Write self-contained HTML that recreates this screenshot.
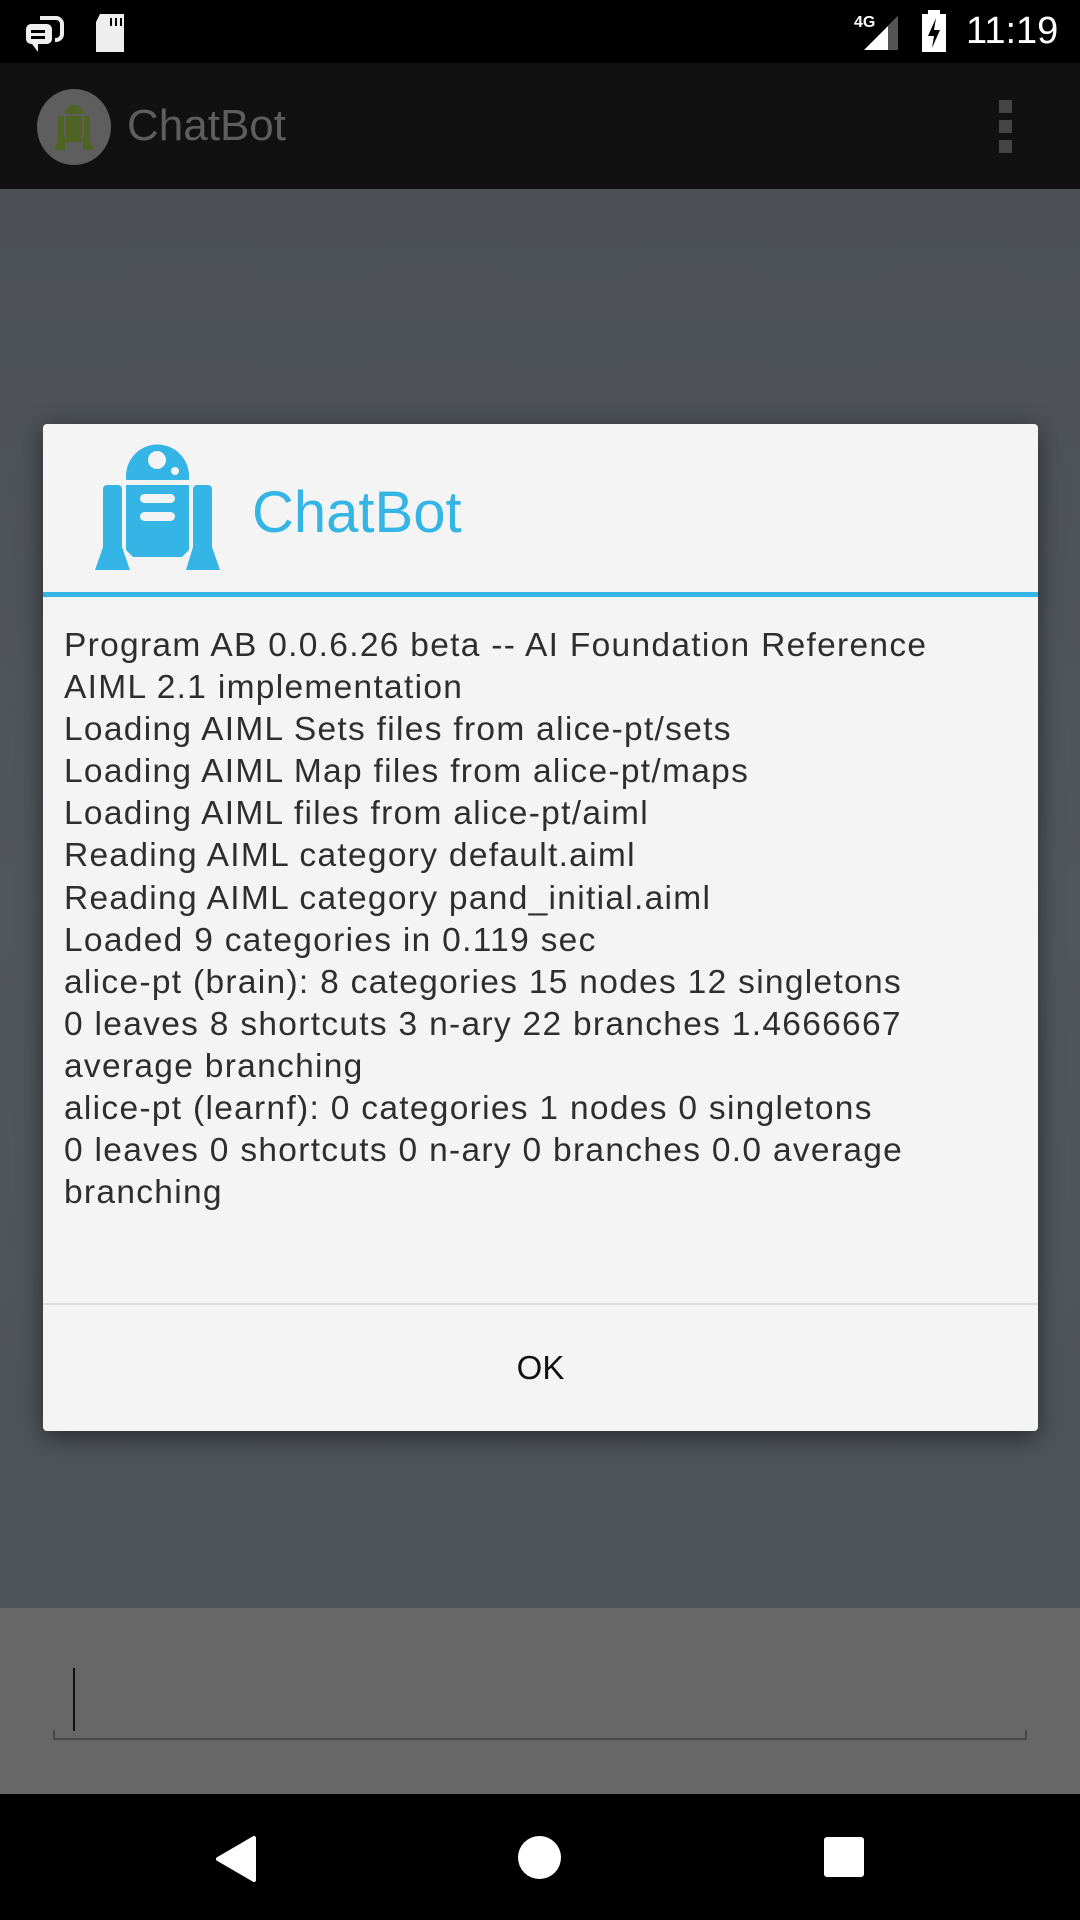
<!DOCTYPE html>
<html><head><meta charset="utf-8"><style>
*{margin:0;padding:0;box-sizing:border-box}
body{width:1080px;height:1920px;overflow:hidden;position:relative;background:#50555a;font-family:"Liberation Sans",sans-serif}
.abs{position:absolute}
</style></head><body>
<!-- status bar -->
<div class="abs" style="left:0;top:0;width:1080px;height:63px;background:#000"></div>
<svg class="abs" style="left:24px;top:12px" width="110" height="42" viewBox="0 0 110 42">
 <path d="M16 6h16a6 6 0 0 1 6 6v10a6 6 0 0 1-6 6h-1" fill="none" stroke="#eee" stroke-width="4"/>
 <rect x="2" y="12" width="26" height="20" rx="5" fill="#eee"/>
 <path d="M8 32l6 8v-8z" fill="#eee"/>
 <rect x="7" y="18" width="14" height="3" fill="#000"/><rect x="7" y="24" width="14" height="3" fill="#000"/>
 <path d="M76 2h24v38h-28v-30z" fill="#eee"/>
 <rect x="86" y="6" width="2" height="8" fill="#000"/><rect x="91" y="6" width="2" height="8" fill="#000"/><rect x="96" y="6" width="2" height="8" fill="#000"/>
</svg>
<div class="abs" style="left:854px;top:14px;color:#fff;font-size:16px;font-weight:bold">4G</div>
<svg class="abs" style="left:862px;top:14px" width="40" height="36"><path d="M2 36L36 2v34z" fill="#fff"/><path d="M26 12L36 2v34h-10z" fill="#555"/></svg>
<svg class="abs" style="left:920px;top:10px" width="28" height="42"><rect x="8" y="0" width="12" height="5" fill="#fff"/><rect x="2" y="4" width="24" height="38" fill="#fff"/><path d="M16 8l-8 18h6l-2 12 8-18h-6z" fill="#000"/></svg>
<div class="abs" style="left:966px;top:10px;color:#fff;font-size:38px">11:19</div>
<!-- app bar -->
<div class="abs" style="left:0;top:63px;width:1080px;height:126px;background:#111"></div>
<div class="abs" style="left:37px;top:89px;width:74px;height:76px;border-radius:50%;background:#5e5e5e"></div>
<svg class="abs" style="left:52px;top:100px" width="44" height="54" viewBox="0 0 44 54"><path d="M13 14a9 9 0 0 1 18 0z" fill="#4f6323"/><rect x="6" y="16" width="6" height="26" fill="#4f6323"/><rect x="32" y="16" width="6" height="26" fill="#4f6323"/><rect x="14" y="16" width="16" height="26" fill="#4f6323"/><path d="M2 50l5-12h6v12zM42 50l-5-12h-6v12z" fill="#4f6323"/></svg>
<div class="abs" style="left:127px;top:101px;color:#5e5e5e;font-size:44px">ChatBot</div>
<div class="abs" style="left:999px;top:100px;width:13px;height:13px;background:#444"></div>
<div class="abs" style="left:999px;top:120px;width:13px;height:13px;background:#444"></div>
<div class="abs" style="left:999px;top:140px;width:13px;height:13px;background:#444"></div>
<!-- bg gradient -->
<div class="abs" style="left:0;top:189px;width:1080px;height:1419px;background:linear-gradient(#4c5055,#52575b 50%,#4e5358)"></div>
<!-- input area -->
<div class="abs" style="left:0;top:1608px;width:1080px;height:186px;background:#676767"></div>
<div class="abs" style="left:73px;top:1668px;width:2px;height:63px;background:#111"></div>
<div class="abs" style="left:53px;top:1738px;width:974px;height:2px;background:#4a4a4a"></div>
<div class="abs" style="left:53px;top:1730px;width:2px;height:10px;background:#4a4a4a"></div>
<div class="abs" style="left:1025px;top:1730px;width:2px;height:10px;background:#4a4a4a"></div>
<!-- nav -->
<div class="abs" style="left:0;top:1794px;width:1080px;height:126px;background:#000"></div>
<svg class="abs" style="left:210px;top:1834px" width="50" height="50"><path d="M44 4v42L8 25z" fill="#fff" stroke="#fff" stroke-width="4" stroke-linejoin="round"/></svg>
<div class="abs" style="left:518px;top:1836px;width:43px;height:43px;border-radius:50%;background:#fff"></div>
<div class="abs" style="left:824px;top:1837px;width:40px;height:40px;border-radius:3px;background:#fff"></div>
<!-- dialog -->
<div class="abs" style="left:43px;top:424px;width:995px;height:1007px;background:#f4f4f4;border-radius:4px;box-shadow:0 6px 24px rgba(0,0,0,.5)"></div>
<svg class="abs" style="left:95px;top:444px" width="126" height="127" viewBox="0 0 126 127">
 <path d="M31 32a31.5 31.5 0 0 1 63 0v4h-63z" fill="#35b5e5"/>
 <circle cx="62" cy="16" r="9" fill="#f4f4f4"/><circle cx="80" cy="27" r="4" fill="#f4f4f4"/>
 <rect x="8" y="41" width="19" height="66" rx="4" fill="#35b5e5"/>
 <rect x="98" y="41" width="19" height="66" rx="4" fill="#35b5e5"/>
 <path d="M31 41h63v65l-7 7h-49l-7-7z" fill="#35b5e5"/>
 <rect x="45" y="50" width="35" height="9" rx="4.5" fill="#f4f4f4"/>
 <rect x="45" y="68" width="35" height="9" rx="4.5" fill="#f4f4f4"/>
 <path d="M0 126l8-23h19l8 23zM91 126l7-23h19l8 23z" fill="#35b5e5"/>
</svg>
<div class="abs" style="left:252px;top:478px;color:#35b5e5;font-size:58px;line-height:70px">ChatBot</div>
<div class="abs" style="left:43px;top:592px;width:995px;height:5px;background:#35b5e5"></div>
<div class="abs" style="left:64px;top:625px;width:980px;color:#2e2e2e;font-size:33.5px;letter-spacing:1.3px;line-height:42.1px;white-space:pre">Program AB 0.0.6.26 beta -- AI Foundation Reference
AIML 2.1 implementation
Loading AIML Sets files from alice-pt/sets
Loading AIML Map files from alice-pt/maps
Loading AIML files from alice-pt/aiml
Reading AIML category default.aiml
Reading AIML category pand_initial.aiml
Loaded 9 categories in 0.119 sec
alice-pt (brain): 8 categories 15 nodes 12 singletons
0 leaves 8 shortcuts 3 n-ary 22 branches 1.4666667
average branching
alice-pt (learnf): 0 categories 1 nodes 0 singletons
0 leaves 0 shortcuts 0 n-ary 0 branches 0.0 average
branching</div>
<div class="abs" style="left:43px;top:1303px;width:995px;height:2px;background:#dcdcdc"></div>
<div class="abs" style="left:43px;top:1349px;width:995px;text-align:center;color:#111;font-size:33px">OK</div>
</body></html>
